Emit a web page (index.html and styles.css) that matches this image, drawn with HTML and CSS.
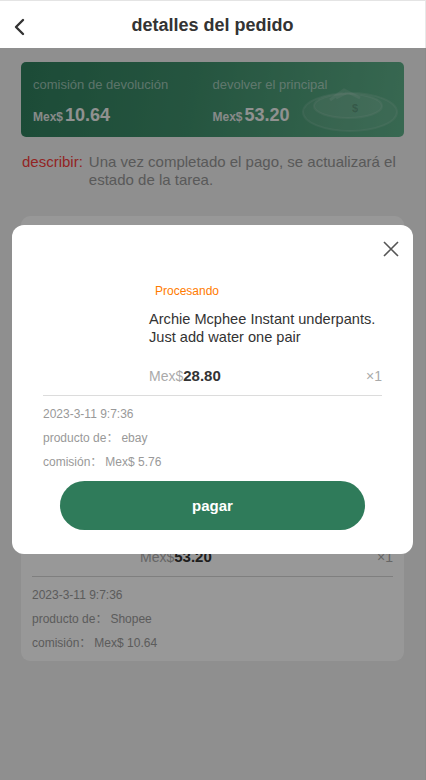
FILE: index.html
```html
<!DOCTYPE html>
<html lang="es">
<head>
<meta charset="utf-8">
<title>detalles del pedido</title>
<link rel="stylesheet" href="styles.css">
</head>
<body>
<div class="app">
  <header class="topbar">
    <span class="back">
      <svg width="14" height="18" viewBox="0 0 14 18"><polyline points="10,2 3,9 10,16" fill="none" stroke="#333" stroke-width="2.4" stroke-linecap="round" stroke-linejoin="round"/></svg>
    </span>
    <h1 class="title">detalles del pedido</h1>
  </header>

  <main class="page">
    <section class="banner">
      <div class="stat">
        <div class="stat-label">comisión de devolución</div>
        <div class="stat-value"><span class="cur">Mex$</span><span class="num">10.64</span></div>
      </div>
      <div class="stat">
        <div class="stat-label">devolver el principal</div>
        <div class="stat-value"><span class="cur">Mex$</span><span class="num">53.20</span></div>
      </div>
      <svg class="coin" width="100" height="60" viewBox="0 0 100 60">
        <ellipse cx="50" cy="34" rx="47" ry="19" fill="rgba(255,255,255,0.06)" stroke="rgba(255,255,255,0.10)" stroke-width="2"/>
        <ellipse cx="48" cy="28" rx="34" ry="12" fill="rgba(255,255,255,0.08)" stroke="rgba(255,255,255,0.10)" stroke-width="2"/>
        <path d="M30 22 L44 12 L60 20 M36 20 L48 14" fill="none" stroke="rgba(255,255,255,0.12)" stroke-width="3"/>
        <text x="52" y="34" font-size="11" font-weight="bold" fill="rgba(0,0,0,0.18)" font-family="Liberation Sans, sans-serif">$</text>
      </svg>
    </section>

    <p class="desc"><span class="desc-key">describir:</span><span class="desc-text">Una vez completado el pago, se actualizará el estado de la tarea.</span></p>

    <section class="card">
      <div class="card-cover"></div>
      <div class="goods">
        <div class="thumb thumb-card"></div>
        <div class="goods-info">
          <span class="status">Procesando</span>
          <div class="goods-name">Shopee</div>
          <div class="price-row"><span><span class="cur-s">Mex$</span><span class="amount">53.20</span></span><span class="qty">×1</span></div>
        </div>
      </div>
      <div class="meta">
        <div class="meta-row">2023-3-11 9:7:36</div>
        <div class="meta-row">producto de：<span class="meta-val">Shopee</span></div>
        <div class="meta-row">comisión：<span class="meta-val">Mex$ 10.64</span></div>
      </div>
    </section>
  </main>

  <div class="mask"></div>

  <div class="modal">
    <span class="close">
      <svg width="16" height="16" viewBox="0 0 16 16"><path d="M1 1 L15 15 M15 1 L1 15" stroke="#555" stroke-width="1.6" fill="none"/></svg>
    </span>
    <div class="goods">
      <div class="thumb"></div>
      <div class="goods-info">
        <span class="status">Procesando</span>
        <div class="goods-name">Archie Mcphee Instant underpants. Just add water one pair</div>
        <div class="price-row"><span><span class="cur-s">Mex$</span><span class="amount">28.80</span></span><span class="qty">×1</span></div>
      </div>
    </div>
    <div class="meta">
      <div class="meta-row">2023-3-11 9:7:36</div>
      <div class="meta-row">producto de：<span class="meta-val">ebay</span></div>
      <div class="meta-row">comisión：<span class="meta-val">Mex$ 5.76</span></div>
    </div>
    <button class="pay">pagar</button>
  </div>
</div>
</body>
</html>
```

FILE: styles.css
```css
* { box-sizing: border-box; }
html, body { margin: 0; padding: 0; }
body {
  font-family: "Liberation Sans", Arial, "Noto Sans CJK SC", sans-serif;
  background: #eeeeee;
  width: 426px;
  height: 780px;
  overflow: hidden;
}
.app {
  position: relative;
  height: 780px;
  border-top: 1px solid #e4e4e4;
  border-right: 1px solid #e8e8e8;
}
.topbar {
  height: 47px;
  background: #fff;
  display: flex;
  align-items: center;
  justify-content: center;
  position: relative;
}
.back {
  position: absolute;
  left: 13px;
  top: 17px;
  display: flex;
}
.title {
  margin: 0;
  font-size: 18px;
  font-weight: bold;
  color: #333;
  padding-top: 2px;
}
.page {
  padding: 14px 21px 0;
}
.banner {
  position: relative;
  height: 75px;
  border-radius: 5px;
  background: linear-gradient(100deg, #2f7d5c 0%, #3f8e6b 45%, #5eae88 100%);
  display: flex;
  padding: 14px 12px 0;
  overflow: hidden;
}
.stat { width: 180px; }
.stat-label {
  font-size: 13px;
  color: rgba(220, 232, 226, 0.62);
  line-height: 18px;
}
.stat-value {
  margin-top: 10px;
  line-height: 22px;
  color: #e9ecea;
}
.cur {
  font-size: 12px;
  font-weight: bold;
  color: #e2e6e4;
  margin-right: 2px;
}
.num {
  font-size: 18px;
  font-weight: bold;
  color: #f0f2f1;
}
.coin {
  position: absolute;
  right: 4px;
  top: 16px;
}
.desc {
  margin: 16px 0 0;
  display: flex;
  font-size: 15px;
  line-height: 18px;
  color: #959595;
}
.desc-key {
  color: #f43c3c;
  flex: none;
  margin: 0 6px 0 1px;
}
.card {
  margin-top: 27px;
  background: #fdfdfd;
  border-radius: 9px;
  padding: 12px 11px 6px;
}
.card-cover { height: 235px; }
.goods {
  display: flex;
  gap: 8px;
  padding-bottom: 10px;
  border-bottom: 1px solid #d4d4d4;
}
.thumb { width: 100px; flex: none; }
.goods-info {
  flex: 1;
  display: flex;
  flex-direction: column;
}
.status {
  font-size: 12px;
  line-height: 18px;
  color: #ff7b00;
  padding-left: 6px;
}
.goods-name {
  margin-top: 10px;
  font-size: 14px;
  line-height: 18px;
  color: #333;
  height: 36px;
}
.modal .goods-name { font-size: 14.6px; letter-spacing: 0; }
.price-row {
  margin-top: 21px;
  display: flex;
  justify-content: space-between;
  align-items: baseline;
  line-height: 18px;
}
.cur-s { font-size: 14px; color: #aaa; }
.amount { font-size: 15px; font-weight: bold; color: #333; }
.qty { font-size: 14px; color: #aaa; }
.meta { padding-top: 6px; }
.meta-row {
  font-size: 12px;
  line-height: 24px;
  color: #999;
}
.meta-val { margin-left: 3px; }
.mask {
  position: absolute;
  left: 0;
  right: -1px;
  top: 47px;
  bottom: 0;
  background: rgba(0, 0, 0, 0.4);
}
.modal {
  position: absolute;
  left: 12px;
  top: 224px;
  width: 401px;
  background: #fff;
  border-radius: 12px;
  padding: 57px 31px 24px;
}
.modal .goods { gap: 11px; border-bottom-color: #dcdcdc; }
.modal .thumb { width: 95px; }
.close {
  position: absolute;
  right: 14px;
  top: 16px;
  display: flex;
}
.pay {
  display: block;
  margin: 7px auto 0;
  width: 305px;
  height: 49px;
  border: none;
  border-radius: 25px;
  background: #2f7b5a;
  color: #fff;
  font-family: "Liberation Sans", Arial, sans-serif;
  font-size: 15px;
  font-weight: bold;
}
```
